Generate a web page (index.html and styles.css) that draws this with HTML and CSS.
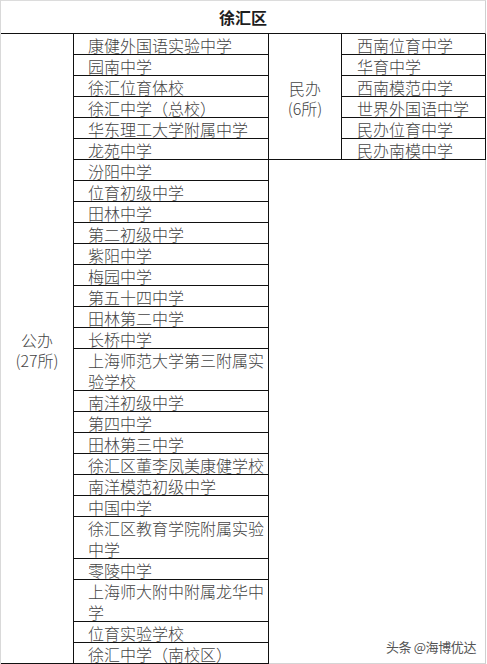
FILE: index.html
```html
<!DOCTYPE html>
<html lang="zh-CN">
<head>
<meta charset="utf-8">
<title>徐汇区</title>
<link rel="stylesheet" href="styles.css">
</head>
<body>
<div class="sheet">
  <div class="title">徐汇区</div>
  <div class="body">
    <div class="cat public"><span>公办</span><span>(27所)</span></div>
    <div class="list">
      <div class="row">康健外国语实验中学</div>
      <div class="row">园南中学</div>
      <div class="row">徐汇位育体校</div>
      <div class="row">徐汇中学（总校）</div>
      <div class="row">华东理工大学附属中学</div>
      <div class="row">龙苑中学</div>
      <div class="row">汾阳中学</div>
      <div class="row">位育初级中学</div>
      <div class="row">田林中学</div>
      <div class="row">第二初级中学</div>
      <div class="row">紫阳中学</div>
      <div class="row">梅园中学</div>
      <div class="row">第五十四中学</div>
      <div class="row">田林第二中学</div>
      <div class="row">长桥中学</div>
      <div class="row double">上海师范大学第三附属实验学校</div>
      <div class="row">南洋初级中学</div>
      <div class="row">第四中学</div>
      <div class="row">田林第三中学</div>
      <div class="row">徐汇区董李凤美康健学校</div>
      <div class="row">南洋模范初级中学</div>
      <div class="row">中国中学</div>
      <div class="row double">徐汇区教育学院附属实验中学</div>
      <div class="row">零陵中学</div>
      <div class="row double">上海师大附中附属龙华中学</div>
      <div class="row">位育实验学校</div>
      <div class="row">徐汇中学（南校区）</div>
    </div>
    <div class="side">
      <div class="private">
        <div class="cat priv"><span>民办</span><span>(6所)</span></div>
        <div class="list2">
          <div class="row">西南位育中学</div>
          <div class="row">华育中学</div>
          <div class="row">西南模范中学</div>
          <div class="row">世界外国语中学</div>
          <div class="row">民办位育中学</div>
          <div class="row">民办南模中学</div>
        </div>
      </div>
      <div class="empty"></div>
    </div>
  </div>
  <div class="mark">头条 @海博优达</div>
</div>
</body>
</html>
```

FILE: styles.css
```css
html, body {
  margin: 0;
  padding: 0;
  background: #ffffff;
}
* { box-sizing: border-box; }

.sheet {
  position: relative;
  width: 486px;
  height: 664px;
  border-left: 1px solid #d9d9d9;
  font-family: "Noto Sans CJK SC", "Noto Sans", sans-serif;
  color: #444444;
  font-size: 16px;
  font-weight: 300;
}

.title {
  height: 34px;
  border-top: 1px solid #dcdcdc;
  border-right: 1px solid #cfcfcf;
  border-bottom: 1px solid #111;
  text-align: center;
  font-weight: bold;
  color: #1e1e1e;
  line-height: 31px;
  padding-top: 1px;
}

.body {
  display: flex;
  height: 630px;
}

.cat {
  display: flex;
  flex-direction: column;
  justify-content: center;
  align-items: center;
  line-height: 20px;
  border-right: 1px solid #111;
  border-bottom: 1px solid #111;
}
.cat.public {
  width: 73px;
  padding-top: 2px;
}
.cat.priv {
  width: 73px;
  height: 126px;
  padding-top: 2px;
}

.list {
  width: 195px;
  border-right: 1px solid #111;
}
.row {
  height: 21px;
  line-height: 20px;
  padding: 1px 0 0 14px;
  border-bottom: 1px solid #111;
}
.row.double {
  height: 42px;
  line-height: 20.5px;
}

.side {
  width: 217px;
  display: flex;
  flex-direction: column;
}
.private {
  display: flex;
}
.list2 {
  width: 144px;
  border-right: 1px solid #111;
}
.list2 .row {
  padding-left: 15px;
}
.empty {
  flex: 1;
  border-right: 1px solid #cfcfcf;
  border-bottom: 1px solid #d5d5d5;
}

.mark {
  position: absolute;
  right: 10px;
  bottom: 10px;
  font-size: 13px;
  line-height: 14px;
  font-weight: 400;
  color: #555;
  text-shadow: 0 0 1px #fff;
  letter-spacing: -0.4px;
}
```
